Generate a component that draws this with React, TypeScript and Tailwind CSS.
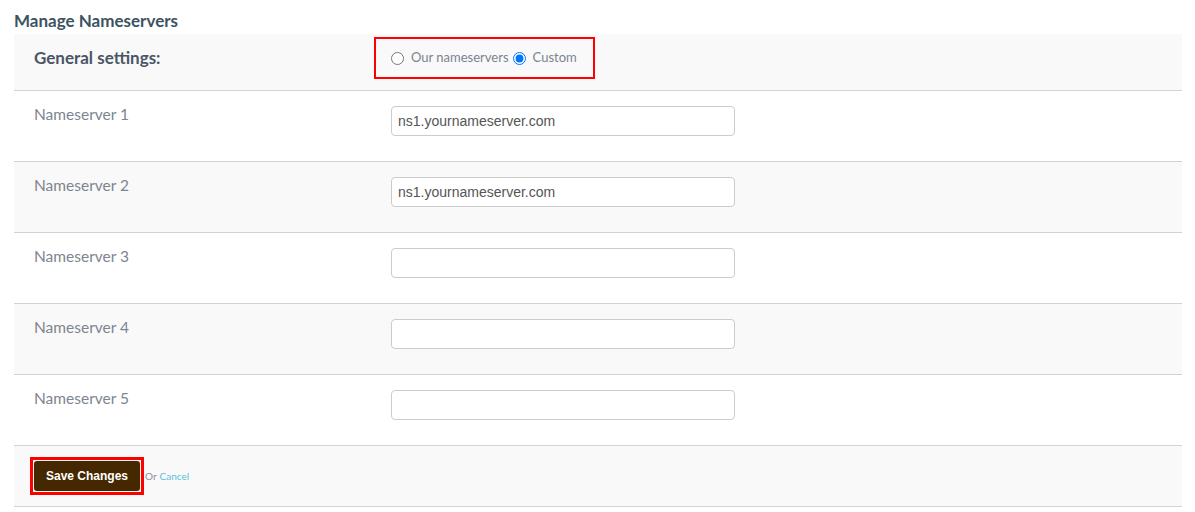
import React from "react";

const servers = [
  { id: 1, value: "ns1.yournameserver.com" },
  { id: 2, value: "ns1.yournameserver.com" },
  { id: 3, value: "" },
  { id: 4, value: "" },
  { id: 5, value: "" },
];

export default function App() {
  return (
    <div className="bg-white min-h-[512px] pl-[14px] pr-[13px] font-['Lato',sans-serif]">
      <h2 className="pt-[10px] pb-[2px] text-[17px] leading-[22px] font-bold text-[#3d5361]">
        Manage Nameservers
      </h2>

      {/* General settings */}
      <div className="flex items-start h-[57px] bg-[#f9f9f9] border-b border-[#cfd3d7]">
        <div className="w-[377px] pl-[20px] pt-[13px] text-[17px] leading-[22px] font-bold text-[#4a5566]">
          General settings:
        </div>
        <div className="-ml-[17px] mt-[3px] flex items-center h-[42px] w-[221px] border-2 border-[#ff0000] pl-[15px] text-[13px] text-[#7b8491]">
          <input type="radio" name="ns" className="m-0 w-[13px] h-[13px]" />
          <span className="ml-[7px]">Our nameservers</span>
          <input type="radio" name="ns" defaultChecked className="m-0 ml-[4px] w-[13px] h-[13px]" />
          <span className="ml-[7px]">Custom</span>
        </div>
      </div>

      {/* Nameserver rows */}
      {servers.map((s, i) => (
        <div
          key={s.id}
          className={`flex h-[71px] border-b border-[#cfd3d7] ${i % 2 === 1 ? "bg-[#f9f9f9]" : "bg-white"}`}
        >
          <div className="w-[377px] pl-[20px] pt-[12px] text-[15.5px] text-[#7d8590]">
            Nameserver {s.id}
          </div>
          <div className="pt-[15px]">
            <input
              type="text"
              defaultValue={s.value}
              className="w-[344px] h-[30px] px-[6px] rounded-[4px] border border-[#cccccc] bg-white font-['Liberation_Sans',sans-serif] text-[14px] text-[#555555] outline-none"
            />
          </div>
        </div>
      ))}

      {/* Footer */}
      <div className="flex items-center h-[61px] bg-[#f9f9f9] border-b border-[#cfd3d7] pl-[16px]">
        <div className="border-[3px] border-[#ff0000] p-px">
          <button className="h-[30px] px-[12px] rounded-[3px] bg-[#452800] text-white text-[12px] font-bold font-['Liberation_Sans',sans-serif]">
            Save Changes
          </button>
        </div>
        <span className="ml-px text-[10px] text-[#8a929c]">Or </span>
        <a href="#" className="ml-[3px] text-[10px] text-[#5bc0de]">
          Cancel
        </a>
      </div>
    </div>
  );
}
